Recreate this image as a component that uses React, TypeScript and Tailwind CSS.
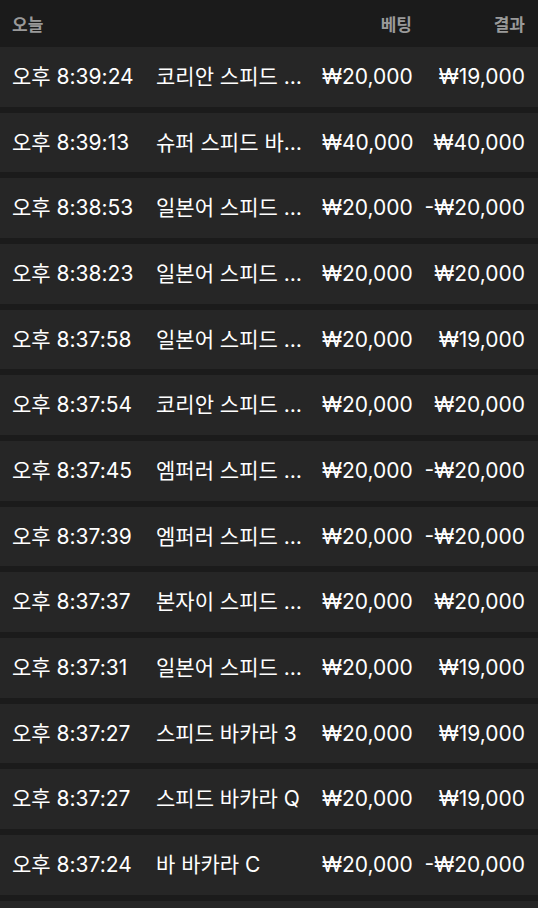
import React from "react";

const rows: [string, string, string, string][] = [
  ["오후 8:39:24", "코리안 스피드 …", "₩20,000", "₩19,000"],
  ["오후 8:39:13", "슈퍼 스피드 바…", "₩40,000", "₩40,000"],
  ["오후 8:38:53", "일본어 스피드 …", "₩20,000", "-₩20,000"],
  ["오후 8:38:23", "일본어 스피드 …", "₩20,000", "₩20,000"],
  ["오후 8:37:58", "일본어 스피드 …", "₩20,000", "₩19,000"],
  ["오후 8:37:54", "코리안 스피드 …", "₩20,000", "₩20,000"],
  ["오후 8:37:45", "엠퍼러 스피드 …", "₩20,000", "-₩20,000"],
  ["오후 8:37:39", "엠퍼러 스피드 …", "₩20,000", "-₩20,000"],
  ["오후 8:37:37", "본자이 스피드 …", "₩20,000", "₩20,000"],
  ["오후 8:37:31", "일본어 스피드 …", "₩20,000", "₩19,000"],
  ["오후 8:37:27", "스피드 바카라 3", "₩20,000", "₩19,000"],
  ["오후 8:37:27", "스피드 바카라 Q", "₩20,000", "₩19,000"],
  ["오후 8:37:24", "바 바카라 C", "₩20,000", "-₩20,000"],
];

export default function App() {
  return (
    <div
      className="w-[538px] h-[908px] overflow-hidden bg-[#1b1b1b] text-white"
      style={{ fontFamily: 'Inter, "Noto Sans CJK KR", sans-serif' }}
    >
      <div className="grid h-[47px] grid-cols-[144px_166px_90px_113px] items-center pl-3 pr-[13px] pt-[5px] text-[17px] font-bold text-[#9a9a9a]">
        <div>오늘</div>
        <div></div>
        <div className="text-right">베팅</div>
        <div className="text-right">결과</div>
      </div>
      <div className="flex flex-col gap-[6px]">
        {rows.map((r, i) => (
          <div
            key={i}
            className="grid h-[59.67px] shrink-0 grid-cols-[144px_166px_90px_113px] items-center bg-[#262626] pl-3 pr-[13px] text-[21px] whitespace-nowrap"
          >
            <div>{r[0]}</div>
            <div className="overflow-hidden">{r[1]}</div>
            <div className="text-right">{r[2]}</div>
            <div className="text-right">{r[3]}</div>
          </div>
        ))}
        <div className="h-[59.67px] shrink-0 bg-[#262626]" />
      </div>
    </div>
  );
}
